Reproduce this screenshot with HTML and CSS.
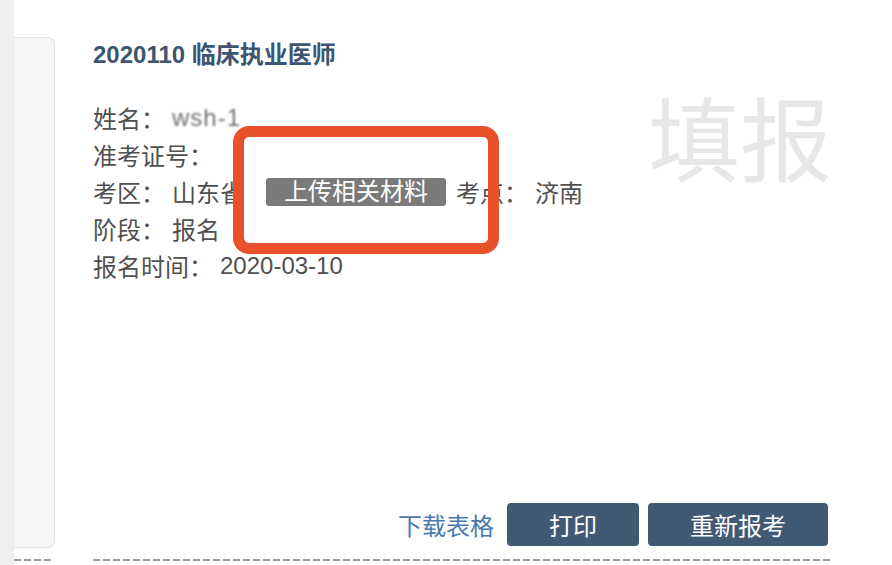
FILE: index.html
```html
<!DOCTYPE html>
<html lang="zh-CN">
<head>
<meta charset="utf-8">
<title>报名信息</title>
<link rel="stylesheet" href="styles.css">
</head>
<body>
<div class="page">
  <div class="strip"></div>
  <div class="side">
    <div class="side-card"></div>
    <div class="dash side-dash"></div>
  </div>
  <div class="main">
    <h1 class="title">2020110 临床执业医师</h1>
    <div class="info">
      <div class="row"><span class="label">姓名：</span><span class="value blurred">wsh-1</span></div>
      <div class="row"><span class="label">准考证号：</span><span class="value"></span></div>
      <div class="row"><span class="label">考区：</span><span class="value">山东省</span><span class="badge">上传相关材料</span><span class="label point">考点：</span><span class="value">济南</span></div>
      <div class="row"><span class="label">阶段：</span><span class="value">报名</span></div>
      <div class="row"><span class="label">报名时间：</span><span class="value">2020-03-10</span></div>
    </div>
    <div class="watermark">填报</div>
    <div class="highlight"></div>
    <div class="actions">
      <a class="link" href="#">下载表格</a>
      <button class="btn btn-print">打印</button>
      <button class="btn btn-redo">重新报考</button>
    </div>
    <div class="dash main-dash"></div>
  </div>
</div>
</body>
</html>
```

FILE: styles.css
```css
* { box-sizing: border-box; }
html, body {
  margin: 0;
  padding: 0;
  background: #ffffff;
}
body {
  font-family: "Liberation Sans", "Noto Sans CJK SC", sans-serif;
  color: #505050;
}
.page {
  display: flex;
  width: 892px;
  height: 565px;
  overflow: hidden;
}
.strip {
  width: 14px;
  background: #efefef;
  flex: none;
}
.side {
  width: 41px;
  flex: none;
  display: flex;
  flex-direction: column;
  padding-top: 37px;
}
.side-card {
  height: 511px;
  background: #f6f6f6;
  border: 1px solid #e2e2e2;
  border-left: none;
  border-radius: 0 7px 7px 0;
  box-shadow: 0 1px 2px rgba(0,0,0,0.04);
}
.dash {
  height: 2px;
  background: repeating-linear-gradient(to right, #999999 0 7px, transparent 7px 10px);
}
.side-dash {
  margin-top: 11px;
  width: 38px;
}
.main {
  position: relative;
  margin-left: 38px;
  width: 737px;
  display: flex;
  flex-direction: column;
}
.title {
  margin: 39px 0 0 0;
  font-size: 24px;
  line-height: 32px;
  font-weight: bold;
  color: #3d5570;
}
.info {
  margin-top: 28px;
}
.row {
  display: flex;
  align-items: center;
  height: 37px;
  font-size: 24px;
  white-space: nowrap;
}
.label {
  color: #505050;
}
.value {
  margin-left: 7px;
  color: #505050;
}
.blurred {
  color: #707070;
  filter: blur(1.3px);
  letter-spacing: 1px;
}
.badge {
  margin-left: 22px;
  height: 28px;
  line-height: 28px;
  padding: 0 18px;
  background: #7a7a7a;
  color: #ffffff;
  border-radius: 3px;
}
.point {
  margin-left: 10px;
}
.watermark {
  position: absolute;
  left: 555px;
  top: 89px;
  font-size: 92px;
  line-height: 1;
  white-space: nowrap;
  color: #e7e7e7;
  font-family: "Noto Sans CJK SC", sans-serif;
}
.highlight {
  position: absolute;
  left: 140px;
  top: 126px;
  width: 266px;
  height: 128px;
  border: 11px solid #e9512b;
  border-radius: 16px;
}
.actions {
  margin-top: auto;
  display: flex;
  justify-content: flex-end;
  align-items: center;
  gap: 9px;
  padding-right: 2px;
}
.link {
  color: #4a79ad;
  font-size: 24px;
  text-decoration: none;
  margin-right: 4px;
}
.btn {
  height: 43px;
  padding: 0 42px;
  border: none;
  border-radius: 4px;
  background: #415a74;
  color: #ffffff;
  font-family: "Liberation Sans", "Noto Sans CJK SC", sans-serif;
  font-size: 24px;
  cursor: pointer;
}
.main-dash {
  margin-top: 13px;
  margin-bottom: 4px;
}
```
